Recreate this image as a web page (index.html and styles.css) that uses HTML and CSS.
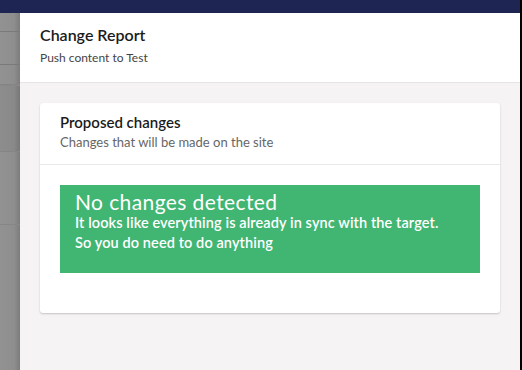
FILE: index.html
```html
<!DOCTYPE html>
<html lang="en">
<head>
    <meta charset="UTF-8">
    <meta name="viewport" content="width=device-width, initial-scale=1.0">
    <title>Change Report</title>
    <link rel="stylesheet" href="styles.css">
</head>
<body>

    <div class="screen">
        <div class="topbar"></div>

        <div class="main">
            <!-- dimmed page behind the panel -->
            <div class="backdrop">
                <div class="row row-1"></div>
                <div class="row row-2"></div>
                <div class="row row-3"></div>
                <div class="row row-4"></div>
                <div class="row row-5"></div>
            </div>

            <div class="panel">
                <div class="panel-header">
                    <h2>Change Report</h2>
                    <p>Push content to Test</p>
                </div>

                <div class="panel-body">
                    <div class="card">
                        <div class="card-header">
                            <h3>Proposed changes</h3>
                            <p>Changes that will be made on the site</p>
                        </div>
                        <div class="card-body">
                            <div class="alert-success">
                                <h4>No changes detected</h4>
                                <p>It looks like everything is already in sync with the target.<br>So you do need to do anything</p>
                            </div>
                        </div>
                    </div>
                </div>
            </div>
        </div>
    </div>

    <div class="edge"></div>

</body>
</html>
```

FILE: styles.css
```css
body {
    font-family: Lato, "Open Sans", sans-serif;
    margin: 0;
    height: 370px;
    display: flex;
    overflow: hidden;
}

.screen {
    flex: 1;
    display: flex;
    flex-direction: column;
}

.topbar {
    height: 13px;
    background-color: #1e2553;
}

.main {
    flex: 1;
    display: flex;
}

/* Sayfanın arkasındaki karartılmış kısım */
.backdrop {
    width: 20px;
    background: linear-gradient(to right, #929292 0%, #8e8e8e 70%, #7c7c7c 100%);
}

.row {
    border-bottom: 1px solid #7a7a7a;
}

.row-1 { height: 18px; }
.row-2 { height: 32px; }
.row-3 { height: 19px; border-bottom-color: #858585; }
.row-4 { height: 65px; border-top: 1px solid #888; background: rgba(0, 0, 0, 0.03); border-bottom-color: #858585; }
.row-5 { height: 72px; border-bottom-color: #868686; }

.panel {
    flex: 1;
    display: flex;
    flex-direction: column;
    background-color: #f5f3f3;
}

.panel-header {
    background-color: #fff;
    padding: 12px 20px 16px;
    border-bottom: 1px solid #e6e4e4;
}

.panel-header h2 {
    margin: 0;
    font-size: 16px;
    font-weight: 600;
    color: #1b1b1b;
    line-height: 20px;
}

.panel-header p {
    margin: 5px 0 0;
    font-size: 12px;
    color: #444;
    line-height: 16px;
}

.panel-body {
    padding: 20px;
}

.card {
    background-color: #fff;
    border-radius: 3px;
    box-shadow: 0 1px 2px rgba(0, 0, 0, 0.2);
}

.card-header {
    padding: 10px 20px 13px;
    border-bottom: 1px solid #e9e9e9;
}

.card-header h3 {
    margin: 0;
    font-size: 15px;
    font-weight: 600;
    color: #1b1b1b;
    line-height: 19px;
}

.card-header p {
    margin: 2px 0 0;
    font-size: 13px;
    color: #666;
    line-height: 17px;
}

.card-body {
    padding: 20px 20px 40px;
}

.alert-success {
    background-color: #41b572;
    color: #fff;
    padding: 6px 15px 16px;
    height: 66px;
}

.alert-success h4 {
    margin: 0;
    font-size: 21px;
    font-weight: 400;
    letter-spacing: 0.4px;
    line-height: 22px;
}

.alert-success p {
    margin: 0;
    font-size: 14.5px;
    font-weight: 600;
    letter-spacing: 0.1px;
    line-height: 20px;
}

.edge {
    width: 2px;
    background-color: #000;
}
```
